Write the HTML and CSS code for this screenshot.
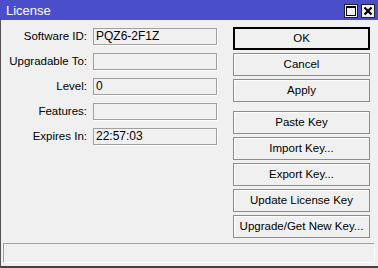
FILE: index.html
```html
<!DOCTYPE html>
<html>
<head>
<meta charset="utf-8">
<link rel="stylesheet" href="styles.css">
</head>
<body>
<div class="window">
  <div class="titlebar">
    <span class="title">License</span>
    <div class="tbtns">
      <span class="tbtn"><svg width="12" height="12" viewBox="0 0 12 12"><rect x="1.5" y="1.5" width="9" height="9" fill="none" stroke="#000" stroke-width="1"/><rect x="1" y="1" width="10" height="2" fill="#000"/></svg></span>
      <span class="tbtn"><svg width="12" height="12" viewBox="0 0 12 12"><path d="M2.5 2.5 L9.5 9.5 M9.5 2.5 L2.5 9.5" stroke="#000" stroke-width="2.2"/></svg></span>
    </div>
  </div>
  <div class="body">
    <div class="main">
      <div class="form">
        <label>Software ID:</label><div class="field">PQZ6-2F1Z</div>
        <label>Upgradable To:</label><div class="field"></div>
        <label>Level:</label><div class="field">0</div>
        <label>Features:</label><div class="field"></div>
        <label>Expires In:</label><div class="field">22:57:03</div>
      </div>
      <div class="buttons">
        <div class="btn default">OK</div>
        <div class="btn">Cancel</div>
        <div class="btn">Apply</div>
        <div class="btn sep">Paste Key</div>
        <div class="btn">Import Key...</div>
        <div class="btn">Export Key...</div>
        <div class="btn">Update License Key</div>
        <div class="btn">Upgrade/Get New Key...</div>
      </div>
    </div>
    <div class="status"></div>
  </div>
</div>
</body>
</html>
```

FILE: styles.css
```css
* { box-sizing: border-box; }
html, body { margin: 0; padding: 0; }
body {
  width: 378px;
  height: 268px;
  overflow: hidden;
  background: #f0f0f0;
  font-family: "Liberation Sans", Arial, sans-serif;
  font-size: 11.5px;
  color: #000;
}
.window {
  width: 378px;
  height: 268px;
  display: flex;
  flex-direction: column;
}
.titlebar {
  height: 20px;
  background: #4b4ecb;
  display: flex;
  align-items: center;
  justify-content: space-between;
  padding: 0 3px 0 6px;
}
.title {
  color: #fff;
  font-size: 13px;
}
.tbtns {
  display: flex;
  gap: 3px;
  margin-top: 1px;
}
.tbtn {
  width: 14px;
  height: 14px;
  background: #f0f0f0;
  border: 1px solid #222;
  display: flex;
  align-items: center;
  justify-content: center;
}
.tbtn svg { display: block; }
.body {
  flex: 1;
  display: flex;
  flex-direction: column;
  border-left: 1px solid #555;
  border-bottom: 2px solid #444;
}
.main {
  flex: 1;
  display: flex;
  padding: 7px 0 0 0;
}
.form {
  display: grid;
  grid-template-columns: 86px 124px;
  column-gap: 6px;
  row-gap: 8px;
  align-content: start;
  grid-auto-rows: 17px;
  margin-top: 1px;
}
.form label {
  text-align: right;
  line-height: 17px;
  color: #000;
}
.field {
  border: 1px solid #a0a0a0;
  box-shadow: 1px 1px 0 #fff;
  background: #f0f0f0;
  line-height: 15px;
  padding-left: 2px;
  font-size: 12px;
}
.buttons {
  margin-left: 16px;
  display: flex;
  flex-direction: column;
  gap: 3px;
  width: 137px;
}
.btn {
  height: 23px;
  border: 1px solid #8c8c8c;
  box-shadow: inset 1px 1px 0 #fff;
  background: #f0f0f0;
  text-align: center;
  line-height: 21px;
}
.btn.default {
  border: 1px solid #000;
  box-shadow: inset 0 0 0 1px #000;
}
.btn.sep { margin-top: 6px; }
.status {
  height: 20px;
  margin: 0 3px 3px 2px;
  border-top: 1px solid #a0a0a0;
  border-left: 1px solid #a0a0a0;
  border-bottom: 1px solid #fff;
  border-right: 1px solid #fff;
}
```
